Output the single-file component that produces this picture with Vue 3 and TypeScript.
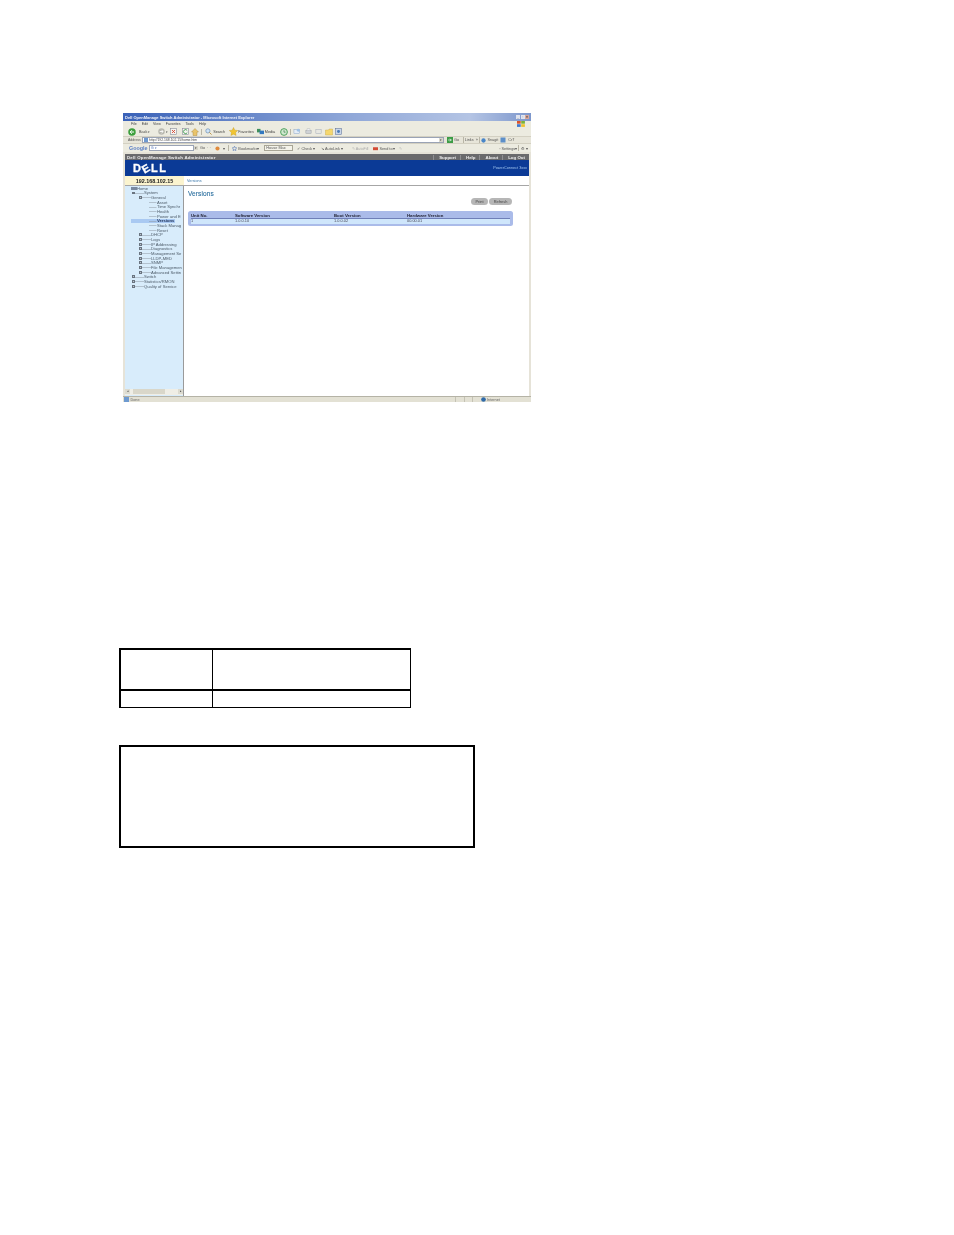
<script setup lang="ts">
interface TreeRow { label: string; level: number; mark: "plus" | "minus" | "folder" | "line"; bold?: boolean; active?: boolean }
const tree: TreeRow[] = [
  { label: "Home", level: 0, mark: "folder" },
  { label: "System", level: 1, mark: "minus" },
  { label: "General", level: 2, mark: "minus" },
  { label: "Asset", level: 3, mark: "line" },
  { label: "Time Synchr", level: 3, mark: "line" },
  { label: "Health", level: 3, mark: "line" },
  { label: "Power and E", level: 3, mark: "line" },
  { label: "Versions", level: 3, mark: "line", bold: true, active: true },
  { label: "Stack Manag", level: 3, mark: "line" },
  { label: "Reset", level: 3, mark: "line" },
  { label: "DHCP", level: 2, mark: "plus" },
  { label: "Logs", level: 2, mark: "plus" },
  { label: "IP Addressing", level: 2, mark: "plus" },
  { label: "Diagnostics", level: 2, mark: "plus" },
  { label: "Management Se", level: 2, mark: "plus" },
  { label: "LLDP-MED", level: 2, mark: "plus" },
  { label: "SNMP", level: 2, mark: "plus" },
  { label: "File Managemen", level: 2, mark: "plus" },
  { label: "Advanced Settin", level: 2, mark: "plus" },
  { label: "Switch", level: 1, mark: "plus" },
  { label: "Statistics/RMON", level: 1, mark: "plus" },
  { label: "Quality of Service", level: 1, mark: "plus" },
];
const menus = ["File", "Edit", "View", "Favorites", "Tools", "Help"];
const headerLinks = ["Support", "Help", "About", "Log Out"];
const versionCols = [
  { head: "Unit No.", value: "1", width: 44 },
  { head: "Software Version", value: "1.0.0.10", width: 99 },
  { head: "Boot Version", value: "1.0.0.02", width: 73 },
  { head: "Hardware Version", value: "00.00.01", width: 80 },
];
function indent(level: number): string {
  return `${[6, 7, 14, 22][level]}px`;
}
</script>

<template>
  <div class="page">
    <div class="browser">
      <div class="title">
        <span class="title-text">Dell OpenManage Switch Administrator - Microsoft Internet Explorer</span>
        <span class="win-btns"><i>_</i><i>▫</i><i class="close">×</i></span>
      </div>
      <div class="menubar">
        <span v-for="m in menus" :key="m">{{ m }}</span>
        <span class="spacer"></span>
        <svg class="xp" viewBox="0 0 8 6" width="8" height="6"><rect x="0" y="0" width="3.700" height="2.700" fill="#d9532c"/><rect x="4.200" y="0" width="3.700" height="2.700" fill="#7bb33a"/><rect x="0" y="3.200" width="3.700" height="2.700" fill="#3f78d0"/><rect x="4.200" y="3.200" width="3.700" height="2.700" fill="#eec22f"/></svg>
      </div>
      <div class="toolbar">
        <svg viewBox="0 0 9 9" width="8" height="8"><circle cx="4.500" cy="4.500" r="4.200" fill="#3c9f3c"/><path d="M6.800 4.500H2.600M4.400 2.500 2.400 4.500l2 2" stroke="#fff" stroke-width="1.100" fill="none"/></svg>
        <span class="ml3">Back</span><span class="arrow ml1">▾</span>
        <svg class="ml8" viewBox="0 0 9 9" width="7" height="7"><circle cx="4.500" cy="4.500" r="4.200" fill="#b9b9b0"/><path d="M2.200 4.500h4.200M4.600 2.500l2 2-2 2" stroke="#fff" stroke-width="1.100" fill="none"/></svg>
        <span class="arrow ml1">▾</span>
        <svg class="ml2" viewBox="0 0 8 8" width="7" height="7"><rect x=".5" y=".5" width="7" height="7" fill="#f4f4f0" stroke="#8a8f9a" stroke-width=".7"/><path d="m2.300 2.300 3.400 3.400m0-3.400L2.300 5.700" stroke="#d5402b"/></svg>
        <svg class="ml5" viewBox="0 0 8 8" width="7" height="7"><rect x=".5" y=".5" width="7" height="7" fill="#f4f4f0" stroke="#8a8f9a" stroke-width=".7"/><path d="M6 3A2.300 2.300 0 1 0 6 5.300" stroke="#3a9a4a" fill="none"/></svg>
        <svg class="ml2" viewBox="0 0 8 8" width="8" height="8"><path d="M4 .5 .5 4H2v3.500h4V4h1.500z" fill="#e9c46a" stroke="#a27f3b" stroke-width=".4"/></svg>
        <i class="sep ml2"></i>
        <svg class="ml3" viewBox="0 0 8 8" width="7" height="7"><circle cx="3.300" cy="3.300" r="2.400" fill="#cfe4f7" stroke="#6d8fb5" stroke-width=".8"/><path d="m5 5 2.500 2.500" stroke="#b68b3c" stroke-width="1"/></svg>
        <span class="ml1">Search</span>
        <svg class="ml4" viewBox="0 0 10 10" width="9" height="9"><path d="m5 .5 1.400 3 3.300.4-2.400 2.200.6 3.300L5 8 2.100 9.400l.6-3.300L.3 3.900l3.300-.4z" fill="#f2c530" stroke="#b9911e" stroke-width=".4"/></svg>
        <span>Favorites</span>
        <svg class="ml2" viewBox="0 0 10 8" width="9" height="7"><path d="M1 1h4v4H1z" fill="#3f8f5c"/><path d="M4 3h5v4H4z" fill="#3278c0"/></svg>
        <span>Media</span>
        <svg class="ml5" viewBox="0 0 9 9" width="8" height="8"><circle cx="4.500" cy="4.500" r="3.800" fill="#cfe8cf" stroke="#3f9a50"/><path d="M4.500 2.500v2.200h1.700" stroke="#2c6c3b" stroke-width=".7" fill="none"/></svg>
        <i class="sep ml2"></i>
        <svg class="ml2" viewBox="0 0 8 8" width="8" height="7"><rect x=".5" y="2" width="6.500" height="4.500" fill="#e5edf7" stroke="#7e9cc0" stroke-width=".5"/><circle cx="5.500" cy="2.500" r="1.700" fill="#9fc1e6"/></svg>
        <svg class="ml4" viewBox="0 0 8 8" width="7" height="7"><rect x="1" y="3" width="6" height="3" fill="#cfd2d6" stroke="#8d939c" stroke-width=".5"/><rect x="2.300" y="1" width="3.400" height="2" fill="#f4f4f4" stroke="#9aa0a8" stroke-width=".4"/></svg>
        <svg class="ml3" viewBox="0 0 8 8" width="7" height="7"><rect x="1" y="1.500" width="6" height="5" fill="#e8e8e2" stroke="#9aa3b0" stroke-width=".5"/></svg>
        <svg class="ml3" viewBox="0 0 8 8" width="8" height="8"><path d="M.5 2h3l.7-1h3.300v6h-7z" fill="#f5d76e" stroke="#c4a43c" stroke-width=".4"/></svg>
        <svg class="ml2" viewBox="0 0 8 8" width="7" height="7"><rect x=".5" y=".5" width="7" height="7" fill="#c9d6ea" stroke="#5a6f95" stroke-width=".6"/><circle cx="4" cy="4" r="1.700" fill="#4a7ab8"/></svg>
      </div>
      <div class="addressbar">
        <span class="addr-label">Address</span>
        <div class="field"><svg viewBox="0 0 6 6" width="4" height="4"><rect width="6" height="6" fill="#6e9ad0"/></svg><span>http://192.168.102.15/home.htm</span><span class="spacer"></span><b class="drop">▾</b></div>
        <svg class="ml3" viewBox="0 0 6 6" width="6" height="6"><rect width="6" height="6" fill="#3b9c45"/><path d="M1.200 3h3M3 1.700 4.300 3 3 4.300" stroke="#fff" stroke-width=".7" fill="none"/></svg>
        <span class="go ml1">Go</span>
        <i class="sep ml4"></i>
        <span class="go ml1">Links</span><span class="go ml2">»</span>
        <i class="sep ml1"></i>
        <svg class="ml2" viewBox="0 0 6 6" width="5" height="5"><circle cx="3" cy="3" r="2.600" fill="#4a86c8"/></svg>
        <span class="go ml1">Snagit</span>
        <svg class="ml2" viewBox="0 0 6 6" width="6" height="6"><rect x=".5" y=".5" width="5" height="5" fill="#5d8fc9"/></svg>
        <span class="go ml2">Cr7</span>
      </div>
      <div class="googlebar">
        <span class="g-logo">Google</span>
        <span class="g-input">G ▾</span>
        <b class="drop">▾</b>
        <span class="go ml2">Go</span>
        <span class="go ml2">· ·</span>
        <svg class="ml4" viewBox="0 0 6 6" width="5" height="5"><circle cx="3" cy="3" r="2.500" fill="#e08a3c"/></svg>
        <span class="go ml3">▾</span>
        <i class="sep ml3"></i>
        <svg class="ml4" viewBox="0 0 6 6" width="5" height="5"><path d="m3 .3.800 1.800 1.900.2-1.400 1.300.4 1.900L3 4.600l-1.700.9.400-1.900L.3 2.300l1.900-.2z" fill="none" stroke="#3a62b0" stroke-width=".6"/></svg>
        <span class="go ml1">Bookmarks▾</span>
        <span class="g-chip ml5">House Max</span>
        <span class="go ml4">✓ Check ▾</span>
        <span class="go ml6">↘ AutoLink ▾</span>
        <span class="go faint ml9">✎ AutoFill</span>
        <svg class="ml5" viewBox="0 0 6 6" width="5" height="5"><rect y="1.500" width="6" height="3.500" fill="#d24b34"/></svg>
        <span class="go ml1">Send to▾</span>
        <span class="go faint ml4">✎</span>
        <span class="spacer"></span>
        <span class="go">▫ Settings▾</span>
        <i class="sep ml1"></i>
        <span class="go ml2">⚙ ▾</span>
      </div>
      <div class="app-top">
        <span class="app-name">Dell OpenManage Switch Administrator</span>
        <span class="spacer"></span>
        <span v-for="l in headerLinks" :key="l" class="app-link">{{ l }}</span>
      </div>
      <div class="app-blue">
        <span class="dell">D<em>E</em>LL</span>
        <span class="spacer"></span>
        <span class="model">PowerConnect 3xxx</span>
      </div>
      <div class="ip-row">
        <span class="ip">192.168.102.15</span>
        <span class="crumb">Versions</span>
      </div>
      <div class="workspace">
        <aside class="side">
          <div class="tree">
            <div v-for="r in tree" :key="r.label" class="tree-row" :style="{ paddingLeft: indent(r.level) }">
              <span class="node" :class="[r.mark, { active: r.active }]">
                <span class="mark"></span>
                <span class="label" :class="{ bold: r.bold }">{{ r.label }}</span>
              </span>
            </div>
          </div>
          <div class="hscroll"><i>◂</i><span class="thumb"></span><i>▸</i></div>
        </aside>
        <main class="content">
          <h1>Versions</h1>
          <div class="actions">
            <span class="pill">Print</span>
            <span class="pill wide">Refresh</span>
          </div>
          <div class="panel">
            <div class="panel-head">
              <span v-for="c in versionCols" :key="c.head" :style="{ width: c.width + 'px' }">{{ c.head }}</span>
            </div>
            <div class="panel-row">
              <span v-for="c in versionCols" :key="c.head" :style="{ width: c.width + 'px' }">{{ c.value }}</span>
            </div>
          </div>
        </main>
      </div>
      <div class="status">
        <svg viewBox="0 0 6 6" width="5" height="5"><rect width="6" height="6" fill="#6e9ad0"/></svg>
        <span>Done</span>
        <span class="spacer"></span>
        <i class="cell"></i><i class="cell"></i><i class="cell"></i>
        <svg viewBox="0 0 6 6" width="5" height="5"><circle cx="3" cy="3" r="2.800" fill="#2f6aa8"/></svg>
        <span class="zone">Internet</span>
      </div>
    </div>

    <div class="doc-table">
      <div class="c c1 h"></div>
      <div class="c c2 h"></div>
      <div class="c c1 b"></div>
      <div class="c c2 b"></div>
    </div>

    <div class="doc-box"></div>
  </div>
</template>

<style scoped>
.page {
  min-height: 1235px;
  box-sizing: border-box;
  padding: 113px 0 0 119px;
  background: #fff;
  font-family: "Liberation Sans", Arial, sans-serif;
  overflow: hidden;
}
.spacer { flex: 1; }
.ml1 { margin-left: 1px; }
.ml2 { margin-left: 2px; }
.ml3 { margin-left: 3px; }
.ml4 { margin-left: 4px; }
.ml5 { margin-left: 5px; }
.ml6 { margin-left: 6px; }
.ml8 { margin-left: 8px; }
.ml9 { margin-left: 9px; }
svg { flex: none; }
.browser {
  width: 408px;
  height: 289px;
  margin-left: 4px;
  display: flex;
  flex-direction: column;
  background: #e6e3d8;
  font-size: 3.800px;
  color: #444;
  filter: blur(0.38px);
  overflow: hidden;
}
.title {
  height: 8px;
  flex: none;
  display: flex;
  align-items: center;
  padding: 0 2px;
  background: linear-gradient(90deg, #3a62b8 0%, #8fa7d8 55%, #b4c4e4 85%, #7d97cc 100%);
  color: #fff;
  font-size: 4px;
  font-weight: bold;
}
.title-text { flex: 1; white-space: nowrap; color: #f1f3fa; }
.win-btns { display: flex; gap: 0.500px; }
.win-btns i {
  width: 4px; height: 4.500px; font-style: normal; font-size: 3.500px; line-height: 4px;
  text-align: center; background: #dfe3ee; color: #333;
}
.win-btns .close { background: #d8a79c; }
.menubar {
  height: 6px; flex: none; display: flex; align-items: center; gap: 5px;
  padding: 0 4px 0 8px; background: #ecebe0; font-size: 3.600px;
}
.menubar .xp { margin-right: 2px; }
.toolbar {
  height: 10px; flex: none; display: flex; align-items: center;
  padding: 0 5px; background: #ecebe0; border-bottom: 0.500px solid #d3d0c2; box-sizing: border-box;
  white-space: nowrap;
}
.arrow { font-size: 3px; }
.sep { width: 0.700px; height: 6px; background: #b8b5a6; flex: none; }
.addressbar {
  height: 7px; flex: none; display: flex; align-items: center;
  padding: 0 3px 0 5px; background: #e7e5d9; border-bottom: 0.500px solid #d3d0c2; box-sizing: border-box;
}
.addr-label { width: 14px; flex: none; color: #555; font-size: 3.500px; white-space: nowrap; }
.field {
  width: 302px; height: 5.500px; flex: none; background: #fff; border: 0.500px solid #9aa3b5; box-sizing: border-box;
  display: flex; align-items: center; gap: 1px; padding-left: 1px; color: #444; font-size: 3.400px;
}
.drop {
  width: 4px; height: 4.500px; background: #d8d6ca; color: #333; font-size: 3px; line-height: 4.500px;
  text-align: center; font-weight: normal; flex: none;
}
.go { color: #555; white-space: nowrap; }
.faint { color: #aaa; }
.googlebar {
  height: 8px; flex: none; display: flex; align-items: center;
  padding: 0 3px 0 6px; background: #ecebe0; box-sizing: border-box;
}
.g-logo { width: 20px; flex: none; color: #5b7fc4; font-weight: bold; font-size: 5.400px; }
.g-input {
  width: 45px; height: 5.500px; flex: none; background: #fff; border: 0.500px solid #9aa3b5; box-sizing: border-box;
  font-size: 3.400px; line-height: 4.500px; padding-left: 1px; color: #3a62b0;
}
.g-chip { width: 29px; box-sizing: border-box; flex: none; white-space: nowrap; border: 0.500px solid #a8a595; background: #f4f3ea; padding: 0 1px; color: #555; }
.app-top {
  height: 6px; margin: 2px 2px 0; flex: none; display: flex; align-items: center;
  padding: 0 4px 0 2px; background: #6a6a6c; color: #eee; font-weight: bold; font-size: 4.400px;
}
.app-name { letter-spacing: 0.180px; }
.app-link { margin-left: 4px; padding-left: 5px; border-left: 0.400px solid #8f8f92; line-height: 5px; }
.app-blue {
  height: 16px; margin: 0 2px; flex: none; display: flex; align-items: center;
  padding: 0 2px 0 8px; background: #0b3a96;
}
.dell { color: #fff; font-weight: bold; font-size: 11px; letter-spacing: 1.400px; line-height: 16px; -webkit-text-stroke: 0.300px #fff; }
.dell em { font-style: normal; display: inline-block; transform: rotate(-30deg); }
.model { color: #9fc3ee; font-size: 3.800px; }
.ip-row {
  height: 10px; margin: 0 2px; flex: none; display: flex; align-items: center;
  background: #fff; border-bottom: 1px solid #a6a6a6; box-sizing: border-box;
}
.ip {
  width: 59px; height: 100%; display: flex; align-items: center; justify-content: center; background: #fbf4cf;
  font-weight: bold; font-size: 5.400px; color: #222;
}
.crumb { margin-left: 3px; color: #3b78ab; font-size: 3.800px; }
.workspace { flex: 1; min-height: 0; margin: 0 2px; display: flex; background: #fff; }
.side {
  width: 58px; flex: none; display: flex; flex-direction: column; background: #d8ecfb;
  border-right: 1px solid #9a9a9a; box-sizing: content-box; overflow: hidden;
}
.tree { flex: 1; }
.tree-row { height: 4.670px; display: flex; align-items: center; white-space: nowrap; color: #4c5a68; font-size: 4.150px; }
.node { display: flex; align-items: center; height: 100%; }
.mark { width: 12px; height: 4px; flex: none; }
.node.plus .mark, .node.minus .mark { background: linear-gradient(#8d97a3, #8d97a3) left 2px center / 10px 0.500px no-repeat; }
.node.plus .mark::before, .node.minus .mark::before {
  content: ""; display: block; width: 2.800px; height: 2.800px; margin-top: 0.600px;
  background: #b9c6d2; border: 0.300px solid #6a7480; box-sizing: border-box;
}
.node.line .mark { width: 8px; margin-left: 2px; background: linear-gradient(#8d97a3, #8d97a3) left center / 7.500px 0.500px no-repeat; }
.node.folder .mark { background: #7a8aa0; height: 2.500px; width: 5.500px; margin-right: 0.500px; }
.bold { font-weight: bold; color: #1b2d55; }
.node.active { background: #a9c9f2; margin-left: -16px; padding-left: 16px; padding-right: 1px; }
.hscroll {
  height: 6px; flex: none; margin-bottom: 1.500px; display: flex; align-items: center; justify-content: space-between; background: #efeee6;
}
.hscroll i { width: 5px; height: 5px; background: #dcdbd0; font-style: normal; font-size: 3px; line-height: 5px; text-align: center; }
.thumb { width: 32px; height: 5px; background: #d9d7ca; margin-right: 10px; }
.content { flex: 1; min-width: 0; padding: 4px 16px 0 4px; }
.content h1 { margin: 0; font-size: 6.500px; line-height: 7px; font-weight: normal; color: #2b6f9f; letter-spacing: 0.100px; -webkit-text-stroke: 0.100px #2b6f9f; }
.actions { display: flex; justify-content: flex-end; gap: 1px; margin-top: 1px; }
.pill {
  width: 17px; height: 7px; border-radius: 4px; background: #b6b6b6; text-align: center;
  line-height: 7px; color: #444; font-size: 3.900px;
}
.pill.wide { width: 23px; margin-right: 1px; }
.panel {
  margin-top: 6px; height: 15px; box-sizing: border-box; background: #aabbe9; border-radius: 2.500px;
  padding: 3px 3px 0;
}
.panel-head { height: 4.300px; display: flex; font-weight: bold; color: #223; font-size: 4.300px; line-height: 4.300px; border-bottom: 0.400px solid #6f7fb8; white-space: nowrap; }
.panel-row { height: 5px; display: flex; background: #cfe6fb; color: #445; font-size: 3.900px; line-height: 4.500px; }
.status {
  height: 6px; flex: none; display: flex; align-items: center; gap: 1.500px; padding: 0 6px 0 1px;
  background: #e3e1d4; border-top: 0.500px solid #b5b3a6; box-sizing: border-box; color: #666;
}
.cell { width: 6px; height: 5px; border-left: 0.500px solid #c4c2b4; flex: none; }
.zone { width: 38px; }

.doc-table {
  width: 292px;
  margin-top: 246px;
  display: grid;
  grid-template-columns: 94px 198px;
  grid-template-rows: 43px 17px;
}
.c { box-sizing: border-box; border-style: solid; border-color: #000; border-width: 0; }
.c1.h { border-width: 2px 1px 2px 2px; }
.c2.h { border-width: 2px 1px 2px 0; }
.c1.b { border-width: 0 1px 1px 2px; }
.c2.b { border-width: 0 1px 1px 0; }
.doc-box {
  width: 356px;
  height: 103px;
  margin-top: 37px;
  box-sizing: border-box;
  border: 2px solid #000;
}
</style>
